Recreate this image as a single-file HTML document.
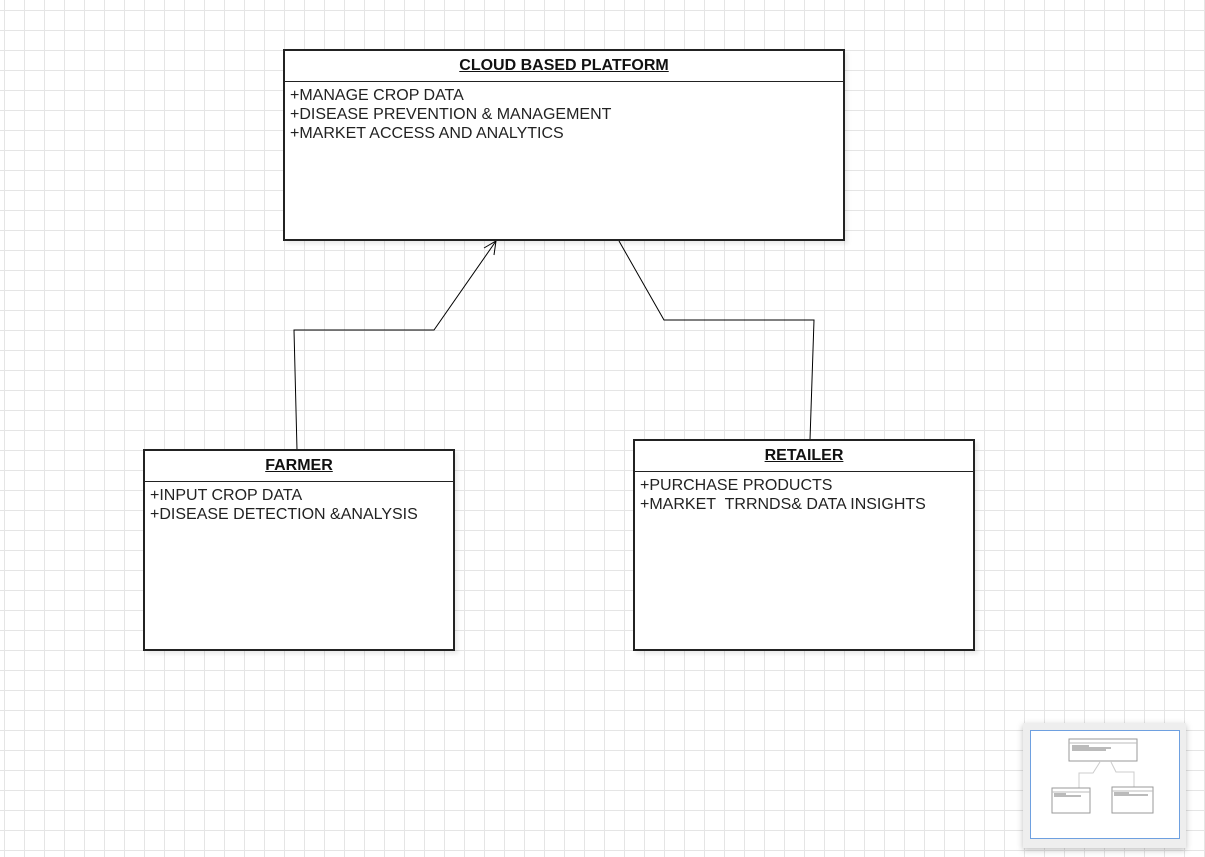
<!DOCTYPE html>
<html><head><style>
body{margin:0;width:1205px;height:857px;overflow:hidden;position:relative;font-family:"Liberation Sans",Arial,sans-serif;
background-color:#fff;
background-image:linear-gradient(to right,#e5e5e5 1px,transparent 1px),linear-gradient(to bottom,#e5e5e5 1px,transparent 1px);
background-size:20px 20px;background-position:4px 10px;}
.box{position:absolute;background:#fff;border:2px solid #222;box-sizing:border-box;box-shadow:3px 3px 4px rgba(0,0,0,0.08)}
.h{border-bottom:1px solid #222;text-align:center;font-weight:bold;font-size:16px;text-decoration:underline;line-height:30px;height:31px;box-sizing:border-box;color:#111}
.b{padding:4px 5px;font-size:16px;line-height:19px;color:#222}
</style></head><body>
<svg style="position:absolute;left:0;top:0" width="1205" height="857">
<polyline points="297,450 294,330 434,330 496,241" fill="none" stroke="#000" stroke-width="1"/>
<polyline points="484,248 496,241 494,255" fill="none" stroke="#000" stroke-width="1"/>
<polyline points="619,241 664,320 814,320 810,440" fill="none" stroke="#000" stroke-width="1"/>
</svg>
<div class="box" style="left:283px;top:49px;width:562px;height:192px">
<div class="h">CLOUD BASED PLATFORM</div>
<div class="b">+MANAGE CROP DATA<br>+DISEASE PREVENTION &amp; MANAGEMENT<br>+MARKET ACCESS AND ANALYTICS</div></div>
<div class="box" style="left:143px;top:449px;width:312px;height:202px">
<div class="h">FARMER</div>
<div class="b">+INPUT CROP DATA<br>+DISEASE DETECTION &amp;ANALYSIS</div></div>
<div class="box" style="left:633px;top:439px;width:342px;height:212px">
<div class="h">RETAILER</div>
<div class="b">+PURCHASE PRODUCTS<br>+MARKET &nbsp;TRRNDS&amp; DATA INSIGHTS</div></div>
<div style="position:absolute;left:1023px;top:723px;width:163px;height:125px;background:#eee;box-shadow:0 2px 6px rgba(0,0,0,0.25)">
<div style="position:absolute;left:7px;top:7px;width:148px;height:107px;background:#fff;border:1px solid #6ea0e0">
<svg width="148" height="107" style="position:absolute;left:0;top:0">
<rect x="38" y="8" width="68" height="22" fill="none" stroke="#999"/>
<line x1="38" y1="12" x2="106" y2="12" stroke="#bbb"/>
<line x1="41" y1="15" x2="58" y2="15" stroke="#777"/>
<line x1="41" y1="17" x2="80" y2="17" stroke="#777"/>
<line x1="41" y1="19" x2="75" y2="19" stroke="#777"/>
<polyline points="48,57 48,42 62,42 69,31" fill="none" stroke="#ccc"/>
<polyline points="80,31 85,41 103,41 103,56" fill="none" stroke="#ccc"/>
<rect x="21" y="57" width="38" height="25" fill="none" stroke="#999"/>
<line x1="21" y1="61" x2="59" y2="61" stroke="#bbb"/>
<line x1="23" y1="63" x2="35" y2="63" stroke="#777"/>
<line x1="23" y1="65" x2="50" y2="65" stroke="#777"/>
<rect x="81" y="56" width="41" height="26" fill="none" stroke="#999"/>
<line x1="81" y1="60" x2="122" y2="60" stroke="#bbb"/>
<line x1="83" y1="62" x2="98" y2="62" stroke="#777"/>
<line x1="83" y1="64" x2="117" y2="64" stroke="#777"/>
</svg></div></div>
</body></html>
